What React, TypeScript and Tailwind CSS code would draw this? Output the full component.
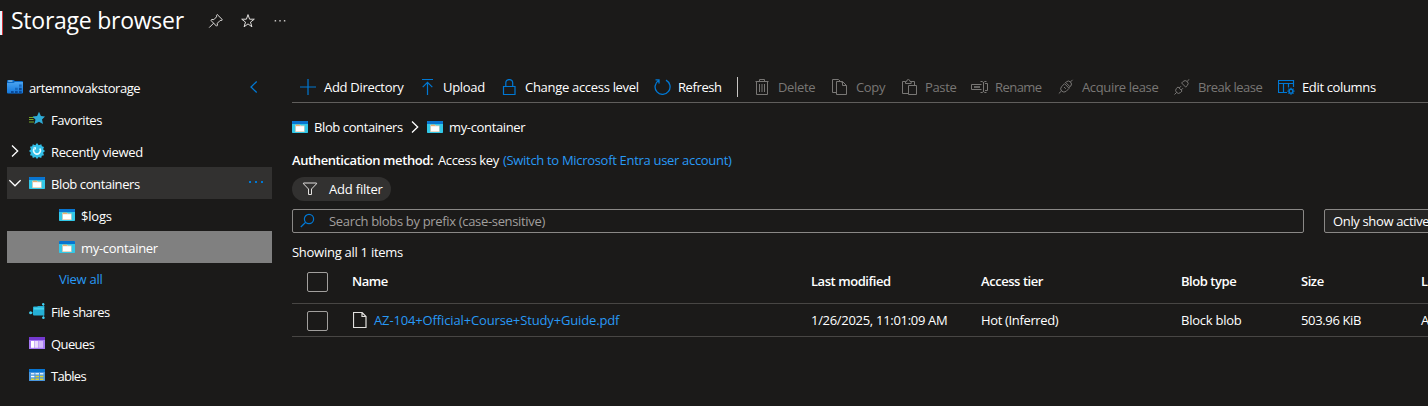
import type { ReactNode } from "react";

type IconProps = { className?: string };

const Svg = ({ children, className = "", w = 16, h = 16 }: { children: ReactNode; className?: string; w?: number; h?: number }) => (
  <svg width={w} height={h} viewBox={`0 0 ${w} ${h}`} fill="none" stroke="currentColor" className={`shrink-0 ${className}`}>
    {children}
  </svg>
);

const PinIcon = () => (
  <Svg className="text-[#e1dfdd]">
    <path d="M9.2 1.5 14.4 6.7 13 7.6 12.2 7.4 9.3 10.3 9.4 12.2 8.6 13.2 2.9 7.4 4 6.4 5.8 6.7 8.6 3.8 8.4 2.6ZM5.6 10.2 1.2 14.6" />
  </Svg>
);

const StarIcon = () => (
  <Svg className="text-[#e1dfdd]">
    <path d="M8 1.6 9.6 6.2H14.3L10.5 9.1 11.9 13.8 8 10.9 4.1 13.8 5.5 9.1 1.7 6.2H6.4Z" />
  </Svg>
);

const DotsIcon = ({ className = "" }: IconProps) => (
  <Svg className={className}>
    <g fill="currentColor" stroke="none">
      <rect x="2.6" y="7" width="1.6" height="1.6" rx=".4" />
      <rect x="7.2" y="7" width="1.6" height="1.6" rx=".4" />
      <rect x="11.8" y="7" width="1.6" height="1.6" rx=".4" />
    </g>
  </Svg>
);

const MenuDotsIcon = ({ className = "" }: IconProps) => (
  <Svg className={className}>
    <path d="M1 6H3V8H1ZM7 6H9V8H7ZM13 6H15V8H13Z" fill="currentColor" stroke="none" />
  </Svg>
);

const StorageIcon = () => (
  <Svg>
    <defs>
      <linearGradient id="storage" x1="0" y1="0" x2="0" y2="1">
        <stop stopColor="#4aa3f0" />
        <stop offset="1" stopColor="#1277dc" />
      </linearGradient>
    </defs>
    <g stroke="none">
      <path d="M0 2Q0 1 1 1H6.5L8 2H15Q16 2 16 3V5H0Z" fill="#0a68c4" />
      <path d="M1.2 1.6H5.5V2.5H1.2Z" fill="#c9ecff" />
      <path d="M0 4H6.5L8 3H16V13.5Q16 14.5 15 14.5H1Q0 14.5 0 13.5Z" fill="url(#storage)" />
      <path d="M4 12H6.7V14.5H4ZM8 12H10.7V14.5H8ZM12 12H14.7V14.5H12ZM12 8.7H14.7V11.2H12Z" fill="#0b4a99" />
      <path d="M8 8.7H10.7V11.2H8ZM12 5.5H14.7V7.8H12Z" fill="#1769be" />
    </g>
  </Svg>
);

const FavoritesIcon = () => (
  <Svg>
    <path d="M0 6.5H5M0 8.5H4.5M0 11H5" stroke="#76a82b" strokeWidth="1" />
    <path d="M10 .7 11.9 4.9 16 5.4 13 8.5 14 12.9 10 10.8 5.3 13.3 6.5 8.7 3.6 5.4 8.1 4.9Z" fill="#2eabd6" stroke="none" />
  </Svg>
);

const RecentIcon = () => (
  <Svg>
    <path
      fill="#32bfe8"
      stroke="none"
      d="M8 0 9.7 2.2 12.3 1.2 12.9 3.3 15 4 14.1 6.3 16 8 14.1 9.7 15 12.2 12.8 12.8 12.2 15 9.7 14 8 16 6.3 14 3.8 15 3.2 12.8 1 12.2 1.9 9.7 0 8 1.9 6.3 1 3.8 3.2 3.2 3.8 1.2 6.3 2.2Z"
    />
    <path d="M5.3 5.5A3.4 3.4 0 1 0 10.7 5.5" stroke="#e4fbff" strokeWidth="1.5" />
    <path d="M4.2 4.2H7V7Z" fill="#e4fbff" stroke="none" />
  </Svg>
);

const ContainerIcon = () => (
  <Svg>
    <g stroke="none">
      <rect y="2" width="16" height="12" rx=".7" fill="#32c8e8" />
      <path d="M0 2.7Q0 2 .7 2H15.3Q16 2 16 2.7V5H0Z" fill="#0874d0" />
      <path d="M3.2 5.8H8L9 6.4H12.6V13H3.2Z" fill="#e6cfb4" />
      <path d="M4 5.8H7.5L8.2 6.6H4Z" fill="#f08b2f" />
      <path d="M4 7.3H12V12.2H4Z" fill="#fff" />
    </g>
  </Svg>
);

const FileShareIcon = () => (
  <Svg>
    <path d="M1.5 9.8H5M14.5 1.5V4M14.5 15V11" stroke="#1b7f9e" />
    <path d="M4 4.5Q4 3.6 5 3.6H8L9.2 3H15.4V12.6H5Q4 12.6 4 11.6Z" fill="#25b0d6" stroke="none" />
    <path d="M5 4.6H15V6.6H5Z" fill="#43d2ed" stroke="none" />
    <g fill="#43d0f0" stroke="none">
      <circle cx="1.6" cy="9.8" r="1.5" />
      <circle cx="14.2" cy="1.3" r="1.2" />
      <circle cx="14.4" cy="14.7" r="1.3" />
    </g>
  </Svg>
);

const QueueIcon = () => (
  <Svg>
    <g stroke="none">
      <rect y="2" width="16" height="12" rx=".6" fill="#a67af4" />
      <path d="M0 2H16V5H0Z" fill="#7439cf" />
      <path d="M2 6H5.4V12.8H2Z" fill="#fff" />
      <path d="M6 6H9.4V12.8H6Z" fill="#e9dbfc" />
      <path d="M10 6H14V12.8H10Z" fill="#d2b8fa" />
    </g>
  </Svg>
);

const TableIcon = () => (
  <Svg>
    <g stroke="none">
      <rect y="2" width="16" height="12" rx=".6" fill="#4a96dd" />
      <path d="M0 2H16V5H0Z" fill="#0875d2" />
      <path d="M2 6H5.4V7.6H2ZM6.4 6H10V7.6H6.4ZM11 6H14.4V7.6H11Z" fill="#dcecfb" />
      <path d="M2 8.8H5.4V10.3H2Z" fill="#fff" />
      <path d="M6.4 8.8H10V10.3H6.4ZM11 8.8H14.4V10.3H11ZM2 11.4H5.4V13H2ZM6.4 11.4H10V13H6.4ZM11 11.4H14.4V13H11Z" fill="#dfd12f" />
    </g>
  </Svg>
);

const AddIcon = () => (
  <Svg>
    <path d="M8 0V16M0 8H16" strokeWidth="1.2" />
  </Svg>
);
const UploadIcon = () => (
  <Svg>
    <path d="M2 .5H13M7.5 16V3.5M2.7 8.2 7.5 3.4 12.3 8.2" strokeWidth="1.2" />
  </Svg>
);
const LockIcon = () => (
  <Svg>
    <path d="M1.5 7.5H13V15.5H1.5ZM3.8 7.5V4A3.45 3.45 0 0 1 10.7 4V7.5" strokeWidth="1.2" />
  </Svg>
);
const RefreshIcon = () => (
  <Svg w={18} h={16}>
    <path d="M4.6 1.5A7.5 7.5 0 1 0 12 1.2M1.5 .8H5V4.4" strokeWidth="1.3" />
  </Svg>
);
const DeleteIcon = () => (
  <Svg>
    <path d="M.5 2.5H13.5M4.5 2.2V.5H9.5V2.2M1.5 2.5V15.5H12.5V2.5M4.5 5V13M7 5V13M9.5 5V13" />
  </Svg>
);
const CopyIcon = () => (
  <Svg>
    <path d="M4.5 13.5H.5V.5H6.5L9.5 3.5M4.5 2.5H10.5L14.5 6.5V15.5H4.5ZM10.5 2.5V6.5H14.5" />
  </Svg>
);
const PasteIcon = () => (
  <Svg>
    <path d="M6 14.5H.5V2.5H3.5M9 2.5H12.5V6M3.5 4.5V2.5H4.7Q4.7 .5 6.3 .5T8 2.5H9.2V4.5ZM6.5 6.5H14.5V15.5H6.5Z" />
  </Svg>
);
const RenameIcon = () => (
  <Svg w={18} h={16}>
    <path d="M10.5 5.5H.5V10.5H10.5M14 4.5H16.5V11.5H14M12.5 3V13M9.5 2.5H11.2L12.5 3.5 13.8 2.5H15.5M9.5 13.5H11.2L12.5 12.5 13.8 13.5H15.5" />
    <path d="M3 8H9" strokeWidth="1.6" />
  </Svg>
);
const AcquireIcon = () => (
  <Svg>
    <path d="M.8 14.5 3.4 12M12.4 3 14.6 .8M8 3.8 12 7.8M3.6 12Q1.6 9.8 3.5 7.8L6.5 4.7 11.1 9.3 8.1 12.4Q5.8 14 3.6 12ZM7 4.2 8.4 2.8Q10.6 1 12.5 3T12.8 7L11.2 8.6M6 8 7.8 9.8" />
  </Svg>
);
const BreakIcon = () => (
  <Svg>
    <path d="M.5 15.5 2.6 13.4M13.2 2.3 15.4 .2M2.5 13.5Q.7 11.3 2.4 9.5L4 7.9 8.1 12 6.5 13.6Q4.4 15.3 2.5 13.5ZM7.6 4 9.2 2.4Q11.2 .7 13.2 2.5T13.3 6.5L11.7 8.1ZM5.2 9 7 7.2M7.2 11 9 9.2" />
  </Svg>
);
const ColumnsIcon = () => (
  <Svg w={18} h={16}>
    <path d="M9 13.5H.5V1.5H15.5V8M.5 4.5H15.5M5.5 4.5V13.5M10.5 4.5V8.5" strokeWidth="1.2" />
    <circle cx="13" cy="12.2" r="1.9" strokeWidth="1.4" />
    <path d="M13 8.7V10M13 14.4V15.7M9.5 12.2H10.8M15.2 12.2H16.5M10.5 9.7 11.4 10.6M14.6 13.8 15.5 14.7M15.5 9.7 14.6 10.6M11.4 13.8 10.5 14.7" strokeWidth="1.2" />
  </Svg>
);
const FilterIcon = () => (
  <Svg className="text-[#e1dfdd]">
    <path d="M1.5 2H14.5V2.8L9.5 8V13.5H6.5V8L1.5 2.8Z" />
  </Svg>
);
const SearchIcon = () => (
  <Svg className="text-[#0078d4]">
    <circle cx="9" cy="6" r="4.6" strokeWidth="1.2" />
    <path d="M5.7 9.3 .8 14" strokeWidth="1.2" />
  </Svg>
);
const FileIcon = () => (
  <Svg w={14} h={16} className="ml-px text-[#e1dfdd]">
    <path d="M.5 .5H9L13 4.5V15.5H.5ZM9 .5V4.5H13" strokeWidth="1.2" />
  </Svg>
);
const Chevron = ({ dir, className = "" }: { dir: "left" | "right" | "down"; className?: string }) => (
  <Svg w={12} h={14} className={className}>
    <path strokeWidth="1.3" d={dir === "left" ? "M8.7 1.5 3 7 8.7 12.5" : dir === "right" ? "M3 1.5 8.7 7 3 12.5" : "M.4 4.2 6 9.8 11.6 4.2"} />
  </Svg>
);

const NavRow = ({ icon, label, chevron, className = "", text = "", nested = false, trailing }: {
  icon: ReactNode; label: string; chevron?: "right" | "down"; className?: string; text?: string; nested?: boolean; trailing?: ReactNode;
}) => (
  <div className={`flex h-8 w-[265px] items-center ${nested ? "pl-[52px]" : "pl-[2px]"} ${className}`}>
    {!nested && <span className="w-5 shrink-0">{chevron && <Chevron dir={chevron} />}</span>}
    {icon}
    <span className={`ml-1.5 pt-0.5 ${text}`}>{label}</span>
    {trailing && <span className="mr-2 ml-auto">{trailing}</span>}
  </div>
);

const Command = ({ icon, label, className, text = "", off = false }: {
  icon: ReactNode; label: string; className: string; text?: string; off?: boolean;
}) => (
  <button className={`flex shrink-0 items-center ${off ? "text-[#797775]" : "text-[#0078d4]"} ${className}`}>
    <span className="w-6 shrink-0">{icon}</span>
    <span className={`${off ? "" : "text-white"} ${text}`}>{label}</span>
  </button>
);

const Checkbox = () => <span role="checkbox" aria-checked="false" className="mr-6 ml-[15px] h-5 w-[21px] shrink-0 rounded-xs border border-[#a19f9d]" />;

export default function App() {
  return (
    <div className="flex h-[406px] w-[1428px] flex-col overflow-hidden bg-[#1b1a19] font-['Open_Sans','Noto_Sans',sans-serif] text-[13px] leading-[18px] tracking-[-0.35px] whitespace-nowrap text-white">
      <header className="flex h-[71px] items-start">
        <div className="mt-[11px] h-6 w-[3px] border-r border-[#d13438] bg-[#e8f4ff]" />
        <h1 className="mt-1 ml-2 w-[197px] text-[23px] leading-8 font-medium tracking-[-0.25px]">Storage browser</h1>
        <div className="mt-[13px] flex gap-4">
          <PinIcon />
          <StarIcon />
          <DotsIcon className="text-[#c8c6c4]" />
        </div>
      </header>

      <div className="flex min-h-0 flex-1">
        <nav className="w-[292px] shrink-0 pl-[7px]">
          <div className="flex h-8 w-[265px] items-center">
            <StorageIcon />
            <span className="ml-1.5 pt-0.5 tracking-[-0.42px]">artemnovakstorage</span>
            <Chevron dir="left" className="mr-3 ml-auto text-[#0078d4]" />
          </div>
          <NavRow icon={<FavoritesIcon />} label="Favorites" text="tracking-[-0.45px]" />
          <NavRow icon={<RecentIcon />} label="Recently viewed" chevron="right" />
          <NavRow icon={<ContainerIcon />} label="Blob containers" chevron="down" className="bg-[#323130]" text="tracking-[-0.4px]" trailing={<MenuDotsIcon className="text-[#0078d4]" />} />
          <NavRow icon={<ContainerIcon />} label="$logs" nested text="tracking-[-0.2px]" />
          <NavRow icon={<ContainerIcon />} label="my-container" nested className="bg-[#808080]" text="tracking-[-0.3px]" />
          <div className="flex h-8 items-center pl-[52px] tracking-[-0.25px] text-[#2899f5]">View all</div>
          <NavRow icon={<FileShareIcon />} label="File shares" text="tracking-[-0.5px]" />
          <NavRow icon={<QueueIcon />} label="Queues" text="tracking-[-0.6px]" />
          <NavRow icon={<TableIcon />} label="Tables" text="tracking-[-0.7px]" />
        </nav>

        <main className="flex min-w-0 flex-1 flex-col">
          <div className="flex h-8 shrink-0 items-center border-b border-[#605e5c] pl-2">
            <Command icon={<AddIcon />} label="Add Directory" className="w-[120px]" text="tracking-[-0.3px]" />
            <Command icon={<UploadIcon />} label="Upload" className="w-[82px]" text="-ml-px tracking-[-0.3px]" />
            <Command icon={<LockIcon />} label="Change access level" className="w-[152px]" text="-ml-px tracking-[-0.3px]" />
            <Command icon={<RefreshIcon />} label="Refresh" className="w-[83px]" text="tracking-[-0.4px]" />
            <div className="mr-[17px] h-5 w-px shrink-0 bg-[#c8c6c4]" />
            <Command icon={<DeleteIcon />} label="Delete" className="w-[77px]" text="-ml-px" off />
            <Command icon={<CopyIcon />} label="Copy" className="w-[70px]" off />
            <Command icon={<PasteIcon />} label="Paste" className="w-[69px]" text="-ml-px" off />
            <Command icon={<RenameIcon />} label="Rename" className="w-[87px]" text="tracking-[-0.55px]" off />
            <Command icon={<AcquireIcon />} label="Acquire lease" className="w-[116px]" off />
            <Command icon={<BreakIcon />} label="Break lease" className="w-[104px]" text="tracking-[-0.5px]" off />
            <Command icon={<ColumnsIcon />} label="Edit columns" className="w-[110px]" />
          </div>

          <div className="mt-[15px] flex h-[18px] shrink-0 items-center">
            <ContainerIcon />
            <span className="ml-1.5 w-[95px] tracking-[-0.4px]">Blob containers</span>
            <Chevron dir="right" className="w-[12px]" />
            <span className="ml-1.5">
              <ContainerIcon />
            </span>
            <span className="ml-1.5">my-container</span>
          </div>

          <div className="mt-[15px] flex h-[18px] shrink-0">
            <span className="w-[146px] font-semibold tracking-[-0.4px]">Authentication method:</span>
            <span className="w-[65px]">Access key</span>
            <a className="tracking-[-0.31px] text-[#2899f5]">(Switch to Microsoft Entra user account)</a>
          </div>

          <button className="mt-2 flex h-6 w-[99px] shrink-0 items-center rounded-full bg-[#323130] pl-2.5">
            <FilterIcon />
            <span className="ml-[11px] tracking-[-0.2px]">Add filter</span>
          </button>

          <div className="mt-2 flex h-6 shrink-0">
            <div className="flex w-[1012px] shrink-0 items-center rounded-xs border border-[#8a8886] pl-[7px] text-[#a19f9d]">
              <SearchIcon />
              <span className="ml-[13px] tracking-[-0.33px]">Search blobs by prefix (case-sensitive)</span>
            </div>
            <div className="ml-5 flex w-[180px] shrink-0 items-center rounded-xs border border-[#8a8886] bg-[#252423] pl-2">Only show active blobs</div>
          </div>

          <div className="mt-2.5 h-[18px] shrink-0 tracking-[-0.27px]">Showing all 1 items</div>

          <div className="flex h-[43px] shrink-0 items-center border-b border-[#484644] pb-[3px] font-semibold tracking-[-0.45px]">
            <span className="flex pt-0.5">
              <Checkbox />
            </span>
            <span className="w-[459px] shrink-0">Name</span>
            <span className="w-[170px] shrink-0">Last modified</span>
            <span className="w-[200px] shrink-0">Access tier</span>
            <span className="w-[120px] shrink-0">Blob type</span>
            <span className="w-[120px] shrink-0">Size</span>
            <span>Lease state</span>
          </div>
          <div className="flex h-[33px] shrink-0 items-center border-b border-[#484644]">
            <span className="flex pt-0.5">
              <Checkbox />
            </span>
            <span className="flex w-[459px] shrink-0 items-center gap-[7px]">
              <FileIcon />
              <a className="tracking-[-0.14px] text-[#2899f5]">AZ-104+Official+Course+Study+Guide.pdf</a>
            </span>
            <span className="w-[170px] shrink-0 tracking-[-0.3px]">1/26/2025, 11:01:09 AM</span>
            <span className="w-[200px] shrink-0">Hot (Inferred)</span>
            <span className="w-[120px] shrink-0 tracking-[-0.25px]">Block blob</span>
            <span className="w-[120px] shrink-0">503.96 KiB</span>
            <span>Available</span>
          </div>
        </main>
      </div>
    </div>
  );
}
